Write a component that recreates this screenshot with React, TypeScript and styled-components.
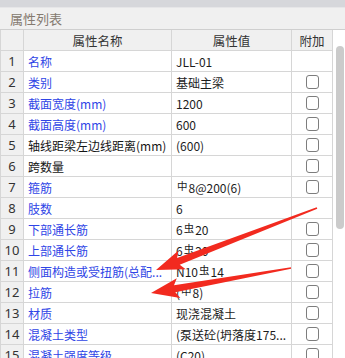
import React from 'react';
import styled, { createGlobalStyle } from 'styled-components';

const GlobalStyle = createGlobalStyle`
  html, body {
    margin: 0;
    padding: 0;
    background: #ffffff;
    overflow: hidden;
  }
  * {
    box-sizing: border-box;
  }
`;

const FONT = `"Noto Sans CJK SC", "Noto Sans", sans-serif`;

type Row = {
  name: string;
  value: React.ReactNode;
  blue: boolean;
  check: boolean;
};

const Page = styled.div`
  position: relative;
  width: 345px;
  height: 358px;
  overflow: hidden;
  font-family: ${FONT};
  background: #ffffff;
`;

const TopBand = styled.div`
  height: 8px;
  background: #d6d7db;
  border-bottom: 1px solid #e6e6e8;
`;

const TitleBar = styled.div`
  height: 22px;
  display: flex;
  align-items: center;
  padding-left: 10px;
  background: #f0f0f0;
  border-bottom: 1px solid #cfcfcf;
  font-size: 13px;
  color: #857a6f;
`;

const Body = styled.div`
  display: flex;
  align-items: flex-start;
`;

const Table = styled.div`
  width: 332px;
  display: grid;
  grid-template-columns: 23px 148px 120px 41px;
  grid-auto-rows: 21px;
  border-left: 1px solid #d6d6d6;
`;

const Cell = styled.div`
  display: flex;
  align-items: center;
  border-right: 1px solid #d6d6d6;
  border-bottom: 1px solid #d6d6d6;
  overflow: hidden;
  white-space: nowrap;
  font-size: 12px;
`;

const HeaderCell = styled(Cell)`
  justify-content: center;
  background: #f0f0f0;
  color: #333333;
  font-size: 12.5px;
`;

const NumCell = styled(Cell)`
  justify-content: center;
  background: #f0f0f0;
  color: #333333;
  font-family: "Noto Sans", sans-serif;
  font-size: 13px;
`;

const NameCell = styled(Cell)<{ $blue: boolean }>`
  padding-left: 4px;
  color: ${({ $blue }) => ($blue ? '#2f45e6' : '#151515')};
`;

const ValueCell = styled(Cell)`
  padding-left: 4px;
  color: #1c1c1c;
`;

const AddCell = styled(Cell)`
  justify-content: center;
`;

const Checkbox = styled.span`
  width: 13px;
  height: 14px;
  border: 1px solid #7d7d7d;
  border-radius: 3px;
  background: #ffffff;
`;

const Rebar = styled.span`
  font-size: 10.5px;
  position: relative;
  top: -2px;
  margin: 0 1px;
`;

const ScrollTrack = styled.div`
  flex: 1;
  display: flex;
  justify-content: flex-end;
  padding: 16px 1px 0 0;
`;

const ScrollThumb = styled.div`
  width: 8px;
  height: 183px;
  border-radius: 4px;
  background: #cbcbcb;
`;

const ArrowLayer = styled.svg`
  position: absolute;
  left: 0;
  top: 0;
  pointer-events: none;
`;

const rows: Row[] = [
  { name: '名称', value: 'JLL-01', blue: true, check: false },
  { name: '类别', value: '基础主梁', blue: true, check: true },
  { name: '截面宽度(mm)', value: '1200', blue: true, check: true },
  { name: '截面高度(mm)', value: '600', blue: true, check: true },
  { name: '轴线距梁左边线距离(mm)', value: '(600)', blue: false, check: true },
  { name: '跨数量', value: '', blue: false, check: true },
  { name: '箍筋', value: <><Rebar>中</Rebar>8@200(6)</>, blue: true, check: true },
  { name: '肢数', value: '6', blue: true, check: false },
  { name: '下部通长筋', value: <>6<Rebar>虫</Rebar>20</>, blue: true, check: true },
  { name: '上部通长筋', value: <>6<Rebar>虫</Rebar>20</>, blue: true, check: true },
  { name: '侧面构造或受扭筋(总配...', value: <>N10<Rebar>虫</Rebar>14</>, blue: true, check: true },
  { name: '拉筋', value: <>(<Rebar>中</Rebar>8)</>, blue: true, check: true },
  { name: '材质', value: '现浇混凝土', blue: true, check: true },
  { name: '混凝土类型', value: '(泵送砼(坍落度175...', blue: true, check: true },
  { name: '混凝土强度等级', value: '(C20)', blue: true, check: true },
];

type Pt = [number, number];

// tapered annotation arrow: thin at the tail, wide head at the tip
const arrowPoints = (tail: Pt, tip: Pt) => {
  const dx = tip[0] - tail[0];
  const dy = tip[1] - tail[1];
  const len = Math.hypot(dx, dy);
  const ux = dx / len;
  const uy = dy / len;
  const nx = -uy;
  const ny = ux;
  const headLen = 24;
  const neck: Pt = [tip[0] - ux * headLen, tip[1] - uy * headLen];
  const barb: Pt = [tip[0] - ux * (headLen + 4), tip[1] - uy * (headLen + 4)];
  const w0 = 0.8;
  const w1 = 3.6;
  const hw = 10;
  const pts: Pt[] = [
    [tail[0] + nx * w0, tail[1] + ny * w0],
    [neck[0] + nx * w1, neck[1] + ny * w1],
    [barb[0] + nx * hw, barb[1] + ny * hw],
    tip,
    [barb[0] - nx * hw, barb[1] - ny * hw],
    [neck[0] - nx * w1, neck[1] - ny * w1],
    [tail[0] - nx * w0, tail[1] - ny * w0],
  ];
  return pts.map((p) => `${p[0].toFixed(1)},${p[1].toFixed(1)}`).join(' ');
};

const App: React.FC = () => {
  return (
    <Page>
      <GlobalStyle />
      <TopBand />
      <TitleBar>属性列表</TitleBar>
      <Body>
        <Table>
          <HeaderCell />
          <HeaderCell>属性名称</HeaderCell>
          <HeaderCell>属性值</HeaderCell>
          <HeaderCell>附加</HeaderCell>
          {rows.map((row, i) => (
            <React.Fragment key={i}>
              <NumCell>{i + 1}</NumCell>
              <NameCell $blue={row.blue}>{row.name}</NameCell>
              <ValueCell>{row.value}</ValueCell>
              <AddCell>{row.check && <Checkbox />}</AddCell>
            </React.Fragment>
          ))}
        </Table>
        <ScrollTrack>
          <ScrollThumb />
        </ScrollTrack>
      </Body>
      <ArrowLayer width="345" height="358" viewBox="0 0 345 358">
        <polygon points={arrowPoints([317, 208], [156, 270])} fill="#f22a1f" />
        <polygon points={arrowPoints([291, 268], [151, 293])} fill="#f22a1f" />
      </ArrowLayer>
    </Page>
  );
};

export default App;
